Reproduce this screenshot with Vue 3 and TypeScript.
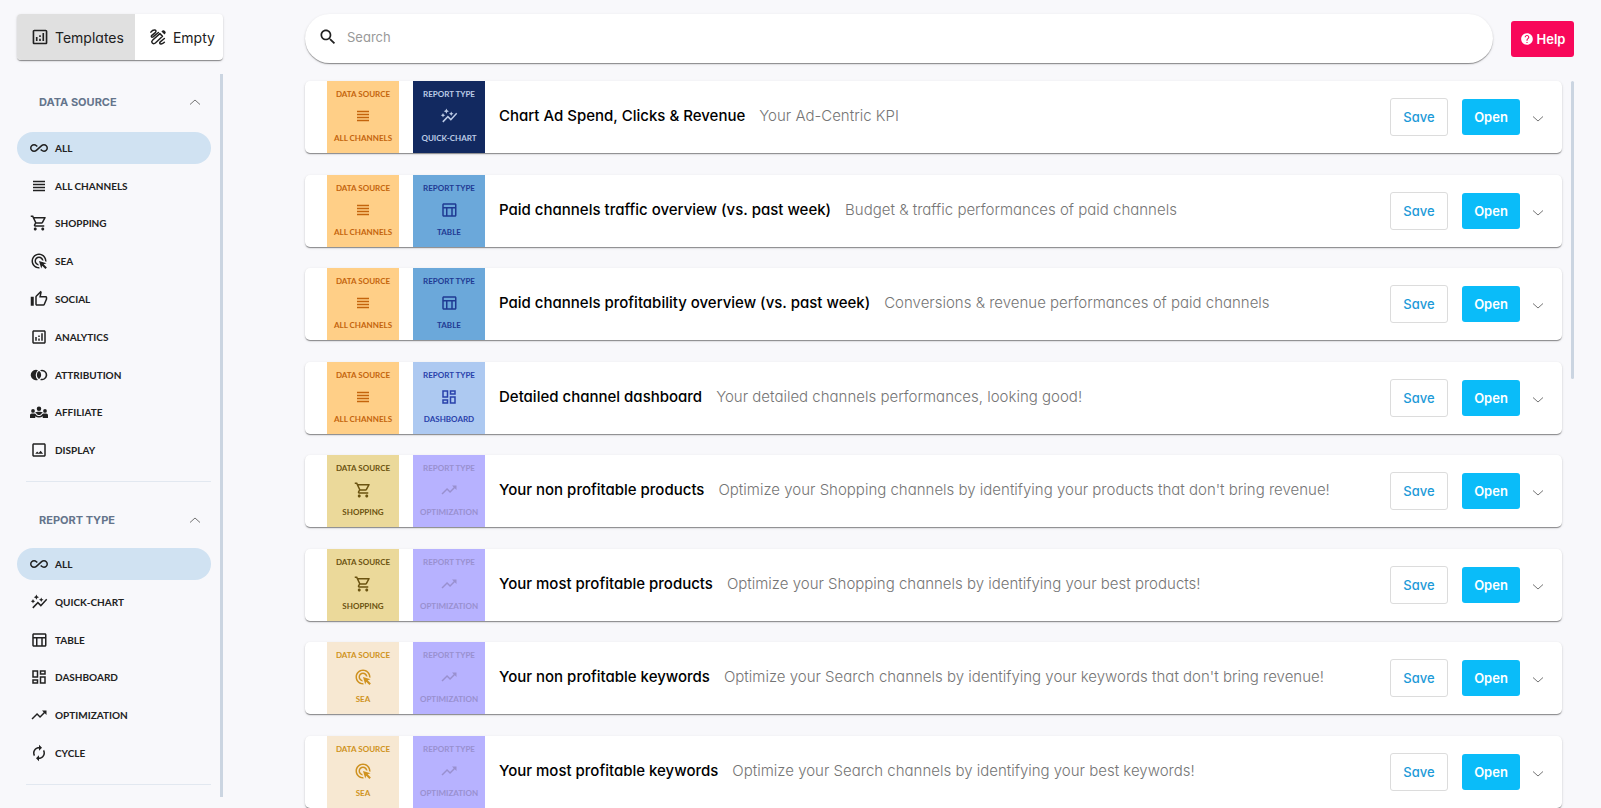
<script setup lang="ts">
import { ref } from 'vue'

type IconName =
  | 'analytics' | 'all' | 'lines' | 'cart' | 'click' | 'thumb' | 'join' | 'groups'
  | 'image' | 'spark' | 'table' | 'dashboard' | 'trend' | 'cycle' | 'search' | 'help'

interface Entry { id: string; label: string; icon: IconName }
interface Template { title: string; text: string; source: string; type: string }

const icons: Record<IconName, string> = {
  analytics: 'M19 3H5c-1.1 0-2 .9-2 2v14c0 1.1.9 2 2 2h14c1.1 0 2-.9 2-2V5c0-1.1-.9-2-2-2zm0 16H5V5h14v14zM7 12h2v5H7zM15 7h2v10h-2zM11 14h2v3h-2zM11 10h2v2h-2z',
  all: 'M18.6 6.62c-1.44 0-2.8.56-3.77 1.53L7.8 14.39c-.64.64-1.49.99-2.4.99-1.87 0-3.39-1.51-3.39-3.38S3.53 8.62 5.4 8.62c.91 0 1.76.35 2.44 1.03l1.13 1 1.51-1.34L9.22 8.2C8.2 7.18 6.84 6.62 5.4 6.62 2.42 6.62 0 9.04 0 12s2.42 5.38 5.4 5.38c1.44 0 2.8-.56 3.77-1.53l7.03-6.24c.64-.64 1.49-.99 2.4-.99 1.87 0 3.39 1.51 3.39 3.38s-1.52 3.38-3.39 3.38c-.9 0-1.76-.35-2.44-1.03l-1.14-1.01-1.51 1.34 1.27 1.12c1.02 1.01 2.37 1.57 3.82 1.57 2.98 0 5.4-2.41 5.4-5.38s-2.42-5.37-5.4-5.37z',
  lines: 'M4 15h16v-2H4v2zm0 4h16v-2H4v2zm0-8h16V9H4v2zm0-6v2h16V5H4z',
  cart: 'M15.55 13c.75 0 1.41-.41 1.75-1.03l3.58-6.49c.37-.66-.11-1.48-.87-1.48H5.21l-.94-2H1v2h2l3.6 7.59-1.35 2.44C4.52 15.37 5.48 17 7 17h12v-2H7l1.1-2h7.45zM6.16 6h12.15l-2.76 5H8.53L6.16 6zM7 18c-1.1 0-1.99.9-1.99 2S5.9 22 7 22s2-.9 2-2-.9-2-2-2zm10 0c-1.1 0-1.99.9-1.99 2s.89 2 1.99 2 2-.9 2-2-.9-2-2-2z',
  click: 'M11.71 17.99C8.53 17.84 6 15.22 6 12c0-3.31 2.69-6 6-6 3.22 0 5.84 2.53 5.99 5.71l-2.1-.63C15.48 9.31 13.89 8 12 8c-2.21 0-4 1.79-4 4 0 1.89 1.31 3.48 3.08 3.89l.63 2.1zM22 12c0 .3-.01.6-.04.9l-1.97-.59c.01-.1.01-.21.01-.31 0-4.42-3.58-8-8-8s-8 3.58-8 8 3.58 8 8 8c.1 0 .21 0 .31-.01l.59 1.97c-.3.03-.6.04-.9.04-5.52 0-10-4.48-10-10S6.48 2 12 2s10 4.48 10 10zm-3.77 4.26L22 15l-10-3 3 10 1.26-3.77 4.27 4.27 1.98-1.98-4.28-4.26z',
  thumb: 'M21 8h-6.31l.95-4.57.03-.32c0-.41-.17-.79-.44-1.06L14.17 1 7.58 7.59C7.22 7.95 7 8.45 7 9v10c0 1.1.9 2 2 2h9c.83 0 1.54-.5 1.84-1.22l3.02-7.05c.09-.23.14-.47.14-.73v-2c0-1.1-.9-2-2-2zm0 4l-3 7H9V9l4.34-4.34L12.23 10H21v2zM1 9h4v12H1z',
  join: 'M8 5a7 7 0 1 0 2.6 13.5a8.5 8.5 0 0 1 0-13A7 7 0 0 0 8 5zM12 6.3a7 7 0 0 0 0 11.4a7 7 0 0 0 0-11.4zM16 5a7 7 0 0 0-2.6.5l1.5 1.6A5 5 0 1 1 14.9 16.9l-1.5 1.6A7 7 0 1 0 16 5z',
  groups: 'M4 13a2.5 2.5 0 1 0 0-5a2.5 2.5 0 0 0 0 5zM20 13a2.5 2.5 0 1 0 0-5a2.5 2.5 0 0 0 0 5zM12 10.5a3 3 0 1 0 0-6a3 3 0 0 0 0 6zM0 20v-3.5C0 15 1 14 2.5 14h3.2c1 0 1.8.5 2.3 1.2C9 16.6 10.4 17.3 12 17.3s3-.7 4-2.1c.5-.7 1.3-1.2 2.3-1.2h3.2c1.5 0 2.5 1 2.5 2.5V20h-7v-2.3c-1.4 1-3.1 1.6-5 1.6s-3.600-.6-5-1.6V20zM12 16c-1.3 0-2.4-.7-3.1-1.7C8.4 13.5 7.5 13 6.8 12.9 7.7 12 9.9 11.5 12 11.5s4.3.5 5.2 1.4c-.7.1-1.6.6-2.1 1.400C14.400 15.3 13.3 16 12 16z',
  image: 'M19 5v14H5V5h14m0-2H5c-1.1 0-2 .9-2 2v14c0 1.1.9 2 2 2h14c1.1 0 2-.9 2-2V5c0-1.1-.9-2-2-2zm-4.86 9.86l-2.5 3.2L9.5 13.9 7 17h10.5z',
  spark: 'M14.06 9.94L12 9l2.06-.94L15 6l.94 2.06L18 9l-2.06.94L15 12l-.94-2.06zM4 14l.94-2.06L7 11l-2.06-.94L4 8l-.94 2.06L1 11l2.06.94L4 14zm4.5-5l1.09-2.41L12 5.5 9.59 4.41 8.5 2 7.41 4.41 5 5.5l2.41 1.09L8.5 9zm-4 11.5l6-6.01 4 4L23 8.93l-1.41-1.41-7.09 7.97-4-4L3 19l1.5 1.5z',
  table: 'M20 3H5c-1.1 0-2 .9-2 2v14c0 1.1.9 2 2 2h15c1.1 0 2-.9 2-2V5c0-1.1-.9-2-2-2zm0 2v3H5V5h15zm-5 14h-5v-9h5v9zM5 10h3v9H5v-9zm12 9v-9h3v9h-3z',
  dashboard: 'M19 5v2h-4V5h4M9 5v6H5V5h4m10 8v6h-4v-6h4M9 17v2H5v-2h4M21 3h-8v6h8V3zM11 3H3v10h8V3zm10 8h-8v10h8V11zm-10 4H3v6h8v-6z',
  trend: 'M16 6l2.29 2.29-4.88 4.88-4-4L2 16.59 3.41 18l6-6 4 4 6.3-6.29L22 12V6z',
  cycle: 'M12 6v3l4-4-4-4v3c-4.42 0-8 3.58-8 8 0 1.57.46 3.03 1.24 4.26L6.7 14.8c-.45-.83-.7-1.79-.7-2.8 0-3.31 2.69-6 6-6zm6.76 1.74L17.3 9.2c.44.84.7 1.79.7 2.8 0 3.31-2.69 6-6 6v-3l-4 4 4 4v-3c4.42 0 8-3.58 8-8 0-1.57-.46-3.03-1.24-4.26z',
  search: 'M15.5 14h-.79l-.28-.27C15.41 12.59 16 11.11 16 9.5 16 5.91 13.09 3 9.5 3S3 5.91 3 9.5 5.91 16 9.5 16c1.61 0 3.09-.59 4.23-1.57l.27.28v.79l5 4.99L20.49 19l-4.99-5zm-6 0C7.01 14 5 11.99 5 9.5S7.01 5 9.5 5 14 7.01 14 9.5 11.99 14 9.5 14z',
  help: 'M12 2C6.48 2 2 6.48 2 12s4.48 10 10 10 10-4.48 10-10S17.52 2 12 2zm1 17h-2v-2h2v2zm2.07-7.75l-.9.92C13.45 12.9 13 13.5 13 15h-2v-.5c0-1.1.45-2.1 1.17-2.83l1.24-1.26c.37-.36.59-.86.59-1.41 0-1.1-.9-2-2-2s-2 .9-2 2H8c0-2.21 1.79-4 4-4s4 1.79 4 4c0 .88-.36 1.68-.93 2.25z',
}

const sources: Entry[] = [
  { id: 'all', label: 'ALL', icon: 'all' },
  { id: 'channels', label: 'ALL CHANNELS', icon: 'lines' },
  { id: 'shopping', label: 'SHOPPING', icon: 'cart' },
  { id: 'sea', label: 'SEA', icon: 'click' },
  { id: 'social', label: 'SOCIAL', icon: 'thumb' },
  { id: 'analytics', label: 'ANALYTICS', icon: 'analytics' },
  { id: 'attribution', label: 'ATTRIBUTION', icon: 'join' },
  { id: 'affiliate', label: 'AFFILIATE', icon: 'groups' },
  { id: 'display', label: 'DISPLAY', icon: 'image' },
]
const types: Entry[] = [
  { id: 'all', label: 'ALL', icon: 'all' },
  { id: 'quick', label: 'QUICK-CHART', icon: 'spark' },
  { id: 'table', label: 'TABLE', icon: 'table' },
  { id: 'dashboard', label: 'DASHBOARD', icon: 'dashboard' },
  { id: 'optimization', label: 'OPTIMIZATION', icon: 'trend' },
  { id: 'cycle', label: 'CYCLE', icon: 'cycle' },
]

const groups = [
  { key: 'source', title: 'DATA SOURCE', entries: sources, selected: ref('all') },
  { key: 'type', title: 'REPORT TYPE', entries: types, selected: ref('all') },
]

const templates: Template[] = [
  { title: 'Chart Ad Spend, Clicks & Revenue', text: 'Your Ad-Centric KPI', source: 'channels', type: 'quick' },
  { title: 'Paid channels traffic overview (vs. past week)', text: 'Budget & traffic performances of paid channels', source: 'channels', type: 'table' },
  { title: 'Paid channels profitability overview (vs. past week)', text: 'Conversions & revenue performances of paid channels', source: 'channels', type: 'table' },
  { title: 'Detailed channel dashboard', text: 'Your detailed channels performances, looking good!', source: 'channels', type: 'dashboard' },
  { title: 'Your non profitable products', text: "Optimize your Shopping channels by identifying your products that don't bring revenue!", source: 'shopping', type: 'optimization' },
  { title: 'Your most profitable products', text: 'Optimize your Shopping channels by identifying your best products!', source: 'shopping', type: 'optimization' },
  { title: 'Your non profitable keywords', text: "Optimize your Search channels by identifying your keywords that don't bring revenue!", source: 'sea', type: 'optimization' },
  { title: 'Your most profitable keywords', text: 'Optimize your Search channels by identifying your best keywords!', source: 'sea', type: 'optimization' },
]

const badges = (t: Template) => [
  { head: 'DATA SOURCE', entry: sources.find((s) => s.id === t.source)! },
  { head: 'REPORT TYPE', entry: types.find((s) => s.id === t.type)! },
]

const tab = ref<'templates' | 'empty'>('templates')
const query = ref('')
</script>

<template>
  <div class="page">
    <aside class="sidebar">
      <div class="tabs">
        <button type="button" class="tab" :class="{ active: tab === 'templates' }" @click="tab = 'templates'">
          <svg class="icon-md" viewBox="1 1 22 22"><path :d="icons.analytics" /></svg>Templates
        </button>
        <button type="button" class="tab" :class="{ active: tab === 'empty' }" @click="tab = 'empty'">
          <svg class="icon-md pen" viewBox="0 0 24 24">
            <path d="M2.500 5.500C4 3.500 6 2.500 8 2.800c2 .5 1.500 2.500 0 3.700L3.800 9.800c-1.600 1.600-.3 3.200 1.600 2L12.500 6" />
            <path d="M4 19.500c-.8-1 0-2.500 1-3.500L14.500 7.500l3.500 3.500-9.500 9c-1.200 1-3.200 1.500-4.500-.5z" />
            <path d="M20.500 14l-5.500 4.500c-1.500 1.500-.5 3 1.200 2.800 1.600-.2 3-1 4.300-2.300" />
            <path class="nib" d="M16.500 4.500l2-1.500c1.500-.8 4.500 2 3.700 3.700l-1.500 2z" />
          </svg>Empty
        </button>
      </div>
      <div class="filters">
        <section v-for="g in groups" :key="g.key" class="group">
          <button type="button" class="group-head">
            {{ g.title }}
            <svg class="chevron" viewBox="1 0 8 6"><path d="M0 5.500L5 1l5 4.500" /></svg>
          </button>
          <ul class="entries" :class="g.key">
            <li v-for="e in g.entries" :key="e.id">
              <button type="button" class="entry" :class="{ active: g.selected.value === e.id }" @click="g.selected.value = e.id">
                <svg class="icon-md" viewBox="0 0 24 24"><path :d="icons[e.icon]" /></svg>{{ e.label }}
              </button>
            </li>
          </ul>
        </section>
      </div>
    </aside>

    <main class="main">
      <header class="top">
        <label class="search">
          <svg class="icon-lg" viewBox="0 0 24 24"><path :d="icons.search" /></svg>
          <input v-model="query" type="text" placeholder="Search" aria-label="Search" />
        </label>
        <button type="button" class="help">
          <svg class="icon-sm" viewBox="0 0 24 24"><path :d="icons.help" /></svg>Help
        </button>
      </header>
      <div class="results">
        <ul class="list">
          <li v-for="t in templates" :key="t.title" class="card">
            <div v-for="b in badges(t)" :key="b.head" class="badge" :class="b.entry.id">
              <span>{{ b.head }}</span>
              <svg class="icon-md" viewBox="0 0 24 24"><path :d="icons[b.entry.icon]" /></svg>
              <span>{{ b.entry.label }}</span>
            </div>
            <h2 class="title">{{ t.title }}</h2>
            <p class="text">{{ t.text }}</p>
            <button type="button" class="save">Save</button>
            <button type="button" class="open">Open</button>
            <button type="button" class="more" aria-label="Details">
              <svg class="chevron" viewBox="1 0 8 6"><path d="M0 .5L5 5l5-4.500" /></svg>
            </button>
          </li>
        </ul>
        <div class="track"><div class="thumb"></div></div>
      </div>
    </main>
  </div>
</template>

<style>
body {
  background: #f8f8fb;
}
</style>

<style scoped>
.page {
  display: flex;
  gap: 82px;
  min-height: 100vh;
  box-sizing: border-box;
  padding: 14px 27px 0 17px;
  font-family: Inter, "Liberation Sans", sans-serif;
  font-feature-settings: "cv11";
  color: #212121;
}
button {
  border: 0;
  padding: 0;
  background: none;
  font: inherit;
  font-feature-settings: inherit;
  color: inherit;
  cursor: pointer;
}
ul {
  list-style: none;
  margin: 0;
  padding: 0;
}
svg {
  flex: none;
  fill: currentColor;
}
.icon-md {
  width: 18px;
  height: 18px;
}
.icon-sm {
  width: 14px;
  height: 14px;
}
.icon-lg {
  width: 20px;
  height: 20px;
}
.pen {
  fill: none;
  stroke: currentColor;
  stroke-width: 2;
  stroke-linecap: round;
  stroke-linejoin: round;
}
.pen .nib {
  fill: currentColor;
  stroke: none;
}
.chevron {
  width: 8px;
  height: 6px;
  overflow: visible;
  fill: none;
  stroke: #757575;
}
.sidebar {
  flex: none;
  width: 206px;
}
.tabs,
.search,
.card {
  background: #fff;
  box-shadow: 0 2px 1px -1px rgba(0, 0, 0, 0.2), 0 1px 1px rgba(0, 0, 0, 0.24), 0 1px 3px rgba(0, 0, 0, 0.12);
}
.tabs {
  display: flex;
  height: 46px;
  border-radius: 4px;
  overflow: hidden;
}
.tab {
  display: flex;
  align-items: center;
  gap: 6px;
  padding: 0 11px 0 14px;
  font-size: 14px;
}
.tab.active {
  background: #e0e0e0;
}
.filters {
  margin-top: 14px;
  padding-right: 9px;
  border-right: 3px solid #cbd5e1;
  height: 723px;
}
.group-head {
  display: flex;
  align-items: center;
  justify-content: space-between;
  width: 100%;
  height: 55px;
  padding: 0 12px 0 22px;
  font-size: 11px;
  font-weight: 700;
  color: #64748b;
}
.group + .group .group-head {
  height: 51px;
}
.entries {
  display: grid;
  grid-auto-rows: 1fr;
  align-items: center;
}
.entries.source {
  height: 340px;
}
.entries.type {
  height: 227px;
}
.entry {
  display: flex;
  align-items: center;
  gap: 7px;
  width: 100%;
  height: 32px;
  padding: 0 13px;
  border-radius: 16px;
  font-family: Lato, "Liberation Sans", sans-serif;
  font-size: 10px;
  font-weight: 700;
}
.entry.active {
  background: #d0e2f2;
}
.group::after {
  content: "";
  display: block;
  margin: 12px 0 12px 9px;
  height: 1px;
  background: #e2e8f0;
}
.main {
  display: flex;
  flex: 1;
  flex-direction: column;
  min-width: 0;
}
.top {
  display: flex;
  align-items: center;
  gap: 18px;
}
.search {
  display: flex;
  flex: 1;
  align-items: center;
  gap: 9px;
  height: 49px;
  box-sizing: border-box;
  padding: 0 24px 4px 13px;
  border-radius: 25px;
}
.search input {
  flex: 1;
  border: 0;
  padding: 0;
  outline: none;
  background: none;
  font: inherit;
  font-feature-settings: inherit;
  font-size: 13px;
}
.search input::placeholder {
  color: #999;
}
.help {
  display: flex;
  align-items: center;
  justify-content: center;
  gap: 3px;
  width: 63px;
  height: 36px;
  border-radius: 3px;
  background: #f8085a;
  color: #fff;
  font-size: 13px;
  font-weight: 600;
}
.results {
  display: flex;
  flex: 1;
  gap: 9px;
  margin-top: 18px;
}
.list {
  display: flex;
  flex: 1;
  flex-direction: column;
  justify-content: space-between;
  gap: 21px;
  min-width: 0;
}
.card {
  display: flex;
  align-items: center;
  gap: 14px;
  height: 72px;
  box-sizing: border-box;
  padding: 0 20px 0 22px;
  border-radius: 5px;
}
.badge {
  display: flex;
  flex: none;
  flex-direction: column;
  align-items: center;
  justify-content: space-between;
  width: 72px;
  height: 72px;
  box-sizing: border-box;
  padding: 7px 0 9px;
  font-family: Lato, "Liberation Sans", sans-serif;
  font-size: 8px;
  font-weight: 700;
  line-height: 12px;
  white-space: nowrap;
}
.badge.channels {
  background: #ffcf87;
  color: #c4640c;
}
.badge.shopping {
  background: #ebd99a;
  color: #6b5310;
}
.badge.sea {
  background: #f7e8d2;
  color: #cf9220;
}
.badge.quick {
  background: #122960;
  color: #bccbe6;
}
.badge.table {
  background: #6ba8da;
  color: #1f3a93;
}
.badge.dashboard {
  background: #adc9f1;
  color: #2941ab;
}
.badge.optimization {
  background: #b7b2ff;
  color: #9990cf;
}
.title,
.text {
  margin: 0;
  padding-bottom: 2px;
  font-size: 15px;
  line-height: 22px;
  white-space: nowrap;
}
.title {
  font-weight: 500;
  color: #000;
}
.text {
  flex: 1;
  min-width: 0;
  font-weight: 300;
  color: #757575;
  overflow: hidden;
  text-overflow: ellipsis;
}
.save,
.open {
  flex: none;
  width: 58px;
  height: 36px;
  border-radius: 3px;
  font-size: 13px;
  font-weight: 500;
}
.save {
  height: 38px;
  border: 1px solid #dcdcdc;
  color: #1d9ad8;
}
.open {
  background: #0abcf9;
  color: #fff;
  font-weight: 600;
}
.more {
  display: flex;
  flex: none;
  padding: 4px 0 0;
}
.track {
  flex: none;
  width: 3px;
}
.track .thumb {
  height: 41%;
  border-radius: 2px;
  background: #cbd5e1;
}
</style>
